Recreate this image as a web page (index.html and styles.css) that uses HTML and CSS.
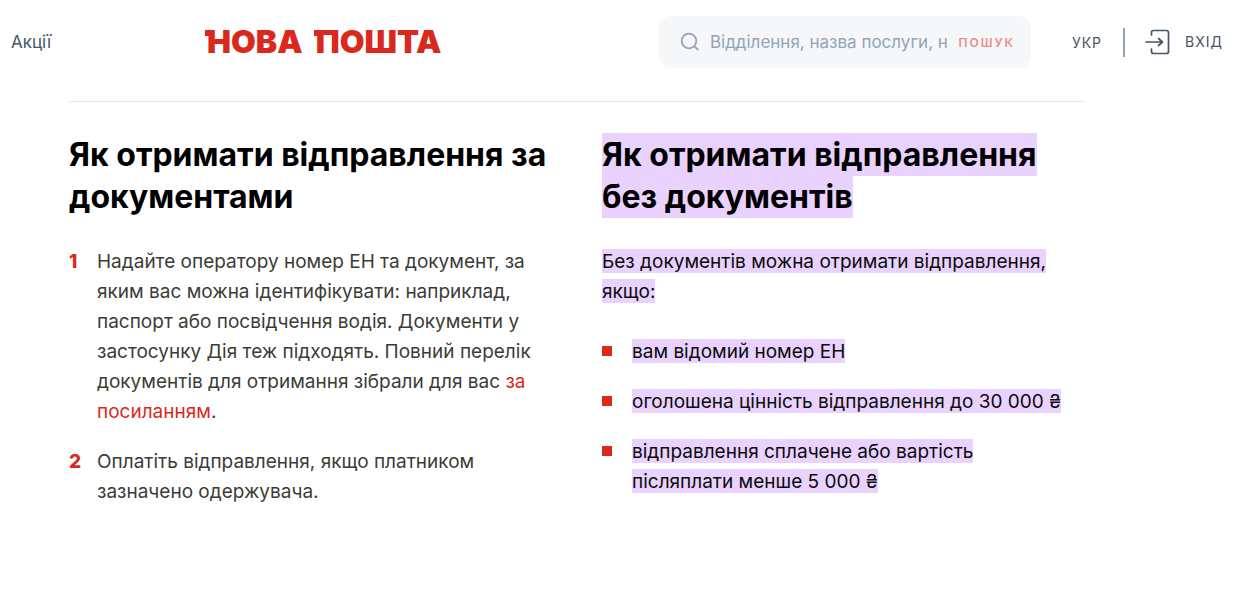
FILE: index.html
```
<!DOCTYPE html>
<html lang="uk">
<head>
<meta charset="utf-8">
<title>Нова пошта</title>
<link rel="stylesheet" href="styles.css">
</head>
<body>
<header class="header">
  <a class="nav-link" href="#">Акції</a>
  <a class="logo" href="#"><span class="logo-word">НОВА</span> <span class="logo-word">ПОШТА</span></a>
  <form class="search">
    <svg class="search-icon" viewBox="0 0 20 20" fill="none" stroke="currentColor" stroke-width="1.800"><circle cx="9" cy="9" r="7.300"/><path d="M14 14l4.500 4.200"/></svg>
    <input class="search-input" type="text" aria-label="Пошук" placeholder="Відділення, назва послуги, номер посилки">
    <button class="search-button" type="submit">ПОШУК</button>
  </form>
  <div class="account">
    <button class="account-item" type="button">УКР</button>
    <span class="divider"></span>
    <a class="account-item login" href="#">
      <svg class="login-icon" viewBox="0 0 26 26" fill="none" stroke="currentColor" stroke-width="1.700" stroke-linecap="round" stroke-linejoin="round"><path d="M6.500 6V3.500Q6.500 1.500 8.500 1.500H21.500Q23.500 1.500 23.500 3.500V22.500Q23.500 24.500 21.500 24.500H8.500Q6.500 24.500 6.500 22.500V20"/><path d="M1 13H17M13.500 9.500L17.500 13L13.500 16.500"/></svg>
      <span>ВХІД</span>
    </a>
  </div>
</header>
<main class="content">
  <section class="column">
    <h2 class="title">Як отримати відправлення за документами</h2>
    <ol class="steps">
      <li class="step">Надайте оператору номер ЕН та документ, за яким вас можна ідентифікувати: наприклад, паспорт або посвідчення водія. Документи у застосунку Дія теж підходять. Повний перелік документів для отримання зібрали для вас <a class="link" href="#">за посиланням</a>.</li>
      <li class="step">Оплатіть відправлення, якщо платником зазначено одержувача.</li>
    </ol>
  </section>
  <section class="column">
    <h2 class="title"><mark class="selected">Як отримати відправлення без документів</mark></h2>
    <p class="intro"><mark class="selected">Без документів можна отримати відправлення, якщо:</mark></p>
    <ul class="conditions">
      <li class="condition"><span><mark class="selected">вам відомий номер ЕН</mark></span></li>
      <li class="condition"><span><mark class="selected">оголошена цінність відправлення до 30 000 ₴</mark></span></li>
      <li class="condition"><span><mark class="selected">відправлення сплачене або вартість післяплати менше 5 000 ₴</mark></span></li>
    </ul>
  </section>
</main>
</body>
</html>
```
FILE: styles.css
```
* { box-sizing: border-box; }

body {
  margin: 0;
  background: #fff;
  color: #3b3c36;
  font-family: Inter, "Noto Sans", sans-serif;
  font-size: 19px;
  line-height: 30px;
}

a { color: inherit; text-decoration: none; }

button {
  padding: 0;
  border: 0;
  background: none;
  font-family: inherit;
  cursor: pointer;
}

.header {
  display: grid;
  grid-template-columns: 194px 1fr 372px auto;
  align-items: center;
  padding: 16px 14px 0 11px;
}

.nav-link {
  color: #475569;
  font-size: 17px;
}

.logo {
  display: flex;
  gap: 11px;
  color: #da291c;
  font-size: 32px;
  font-weight: 900;
}

.logo-word {
  display: flex;
}

/* Short slab at the upper left of each word */
.logo-word::before {
  content: "";
  width: 4px;
  height: 6px;
  margin: 3px -2px 0 0;
  background: #da291c;
}

.search {
  display: flex;
  align-items: center;
  height: 52px;
  padding: 0 16px 0 21px;
  border-radius: 12px;
  background: #f5f7f9;
}

.search-icon {
  width: 20px;
  height: 20px;
  flex: none;
  color: #94a3b8;
}

.search-input {
  flex: 1;
  min-width: 0;
  margin: 0 11px 0 10px;
  padding: 0;
  border: 0;
  outline: 0;
  background: none;
  font-family: inherit;
  font-size: 17px;
  color: #475569;
}

.search-input::placeholder { color: #94a3b8; opacity: 1; }

.search-button {
  color: #e98f87;
  font-size: 12px;
  font-weight: 600;
  letter-spacing: 2px;
}

.account {
  display: flex;
  align-items: center;
  margin-left: 41px;
}

.account-item {
  color: #475569;
  font-size: 14px;
  letter-spacing: 1px;
}

.divider {
  width: 2px;
  height: 29px;
  margin: 0 20px 0 21px;
  background: #94a3b8;
}

.login {
  display: flex;
  align-items: center;
  gap: 14px;
}

.login-icon { width: 26px; height: 26px; }

.content {
  display: grid;
  grid-template-columns: 1fr 1fr;
  gap: 50px;
  margin: 33px 152px 0 69px;
  padding-top: 32px;
  border-top: 1px solid #e2e8f0;
}

.title {
  margin: 0 0 29px;
  color: #000;
  font-size: 32px;
  font-weight: 700;
  line-height: 42px;
}

.selected {
  padding: 1px 0 0;
  background: #e9d2fd;
  color: #0b0b0b;
  box-decoration-break: clone;
  -webkit-box-decoration-break: clone;
}

.title .selected {
  padding: 2px 0;
  color: #000;
}

.steps,
.conditions {
  display: grid;
  gap: 20px;
  margin: 0;
  padding: 0;
  list-style: none;
}

.steps { counter-reset: step; }

.step {
  position: relative;
  padding-left: 28px;
  counter-increment: step;
}

.step::before {
  content: counter(step);
  position: absolute;
  left: 0;
  color: #da291c;
  font-weight: 800;
}

.link { color: #da291c; }

.intro { margin: 0 0 30px; }

.condition {
  display: flex;
  gap: 20px;
  padding-right: 12px;
}

.condition::before {
  content: "";
  flex: none;
  width: 10px;
  height: 10px;
  margin-top: 9px;
  background: #da291c;
}
```
